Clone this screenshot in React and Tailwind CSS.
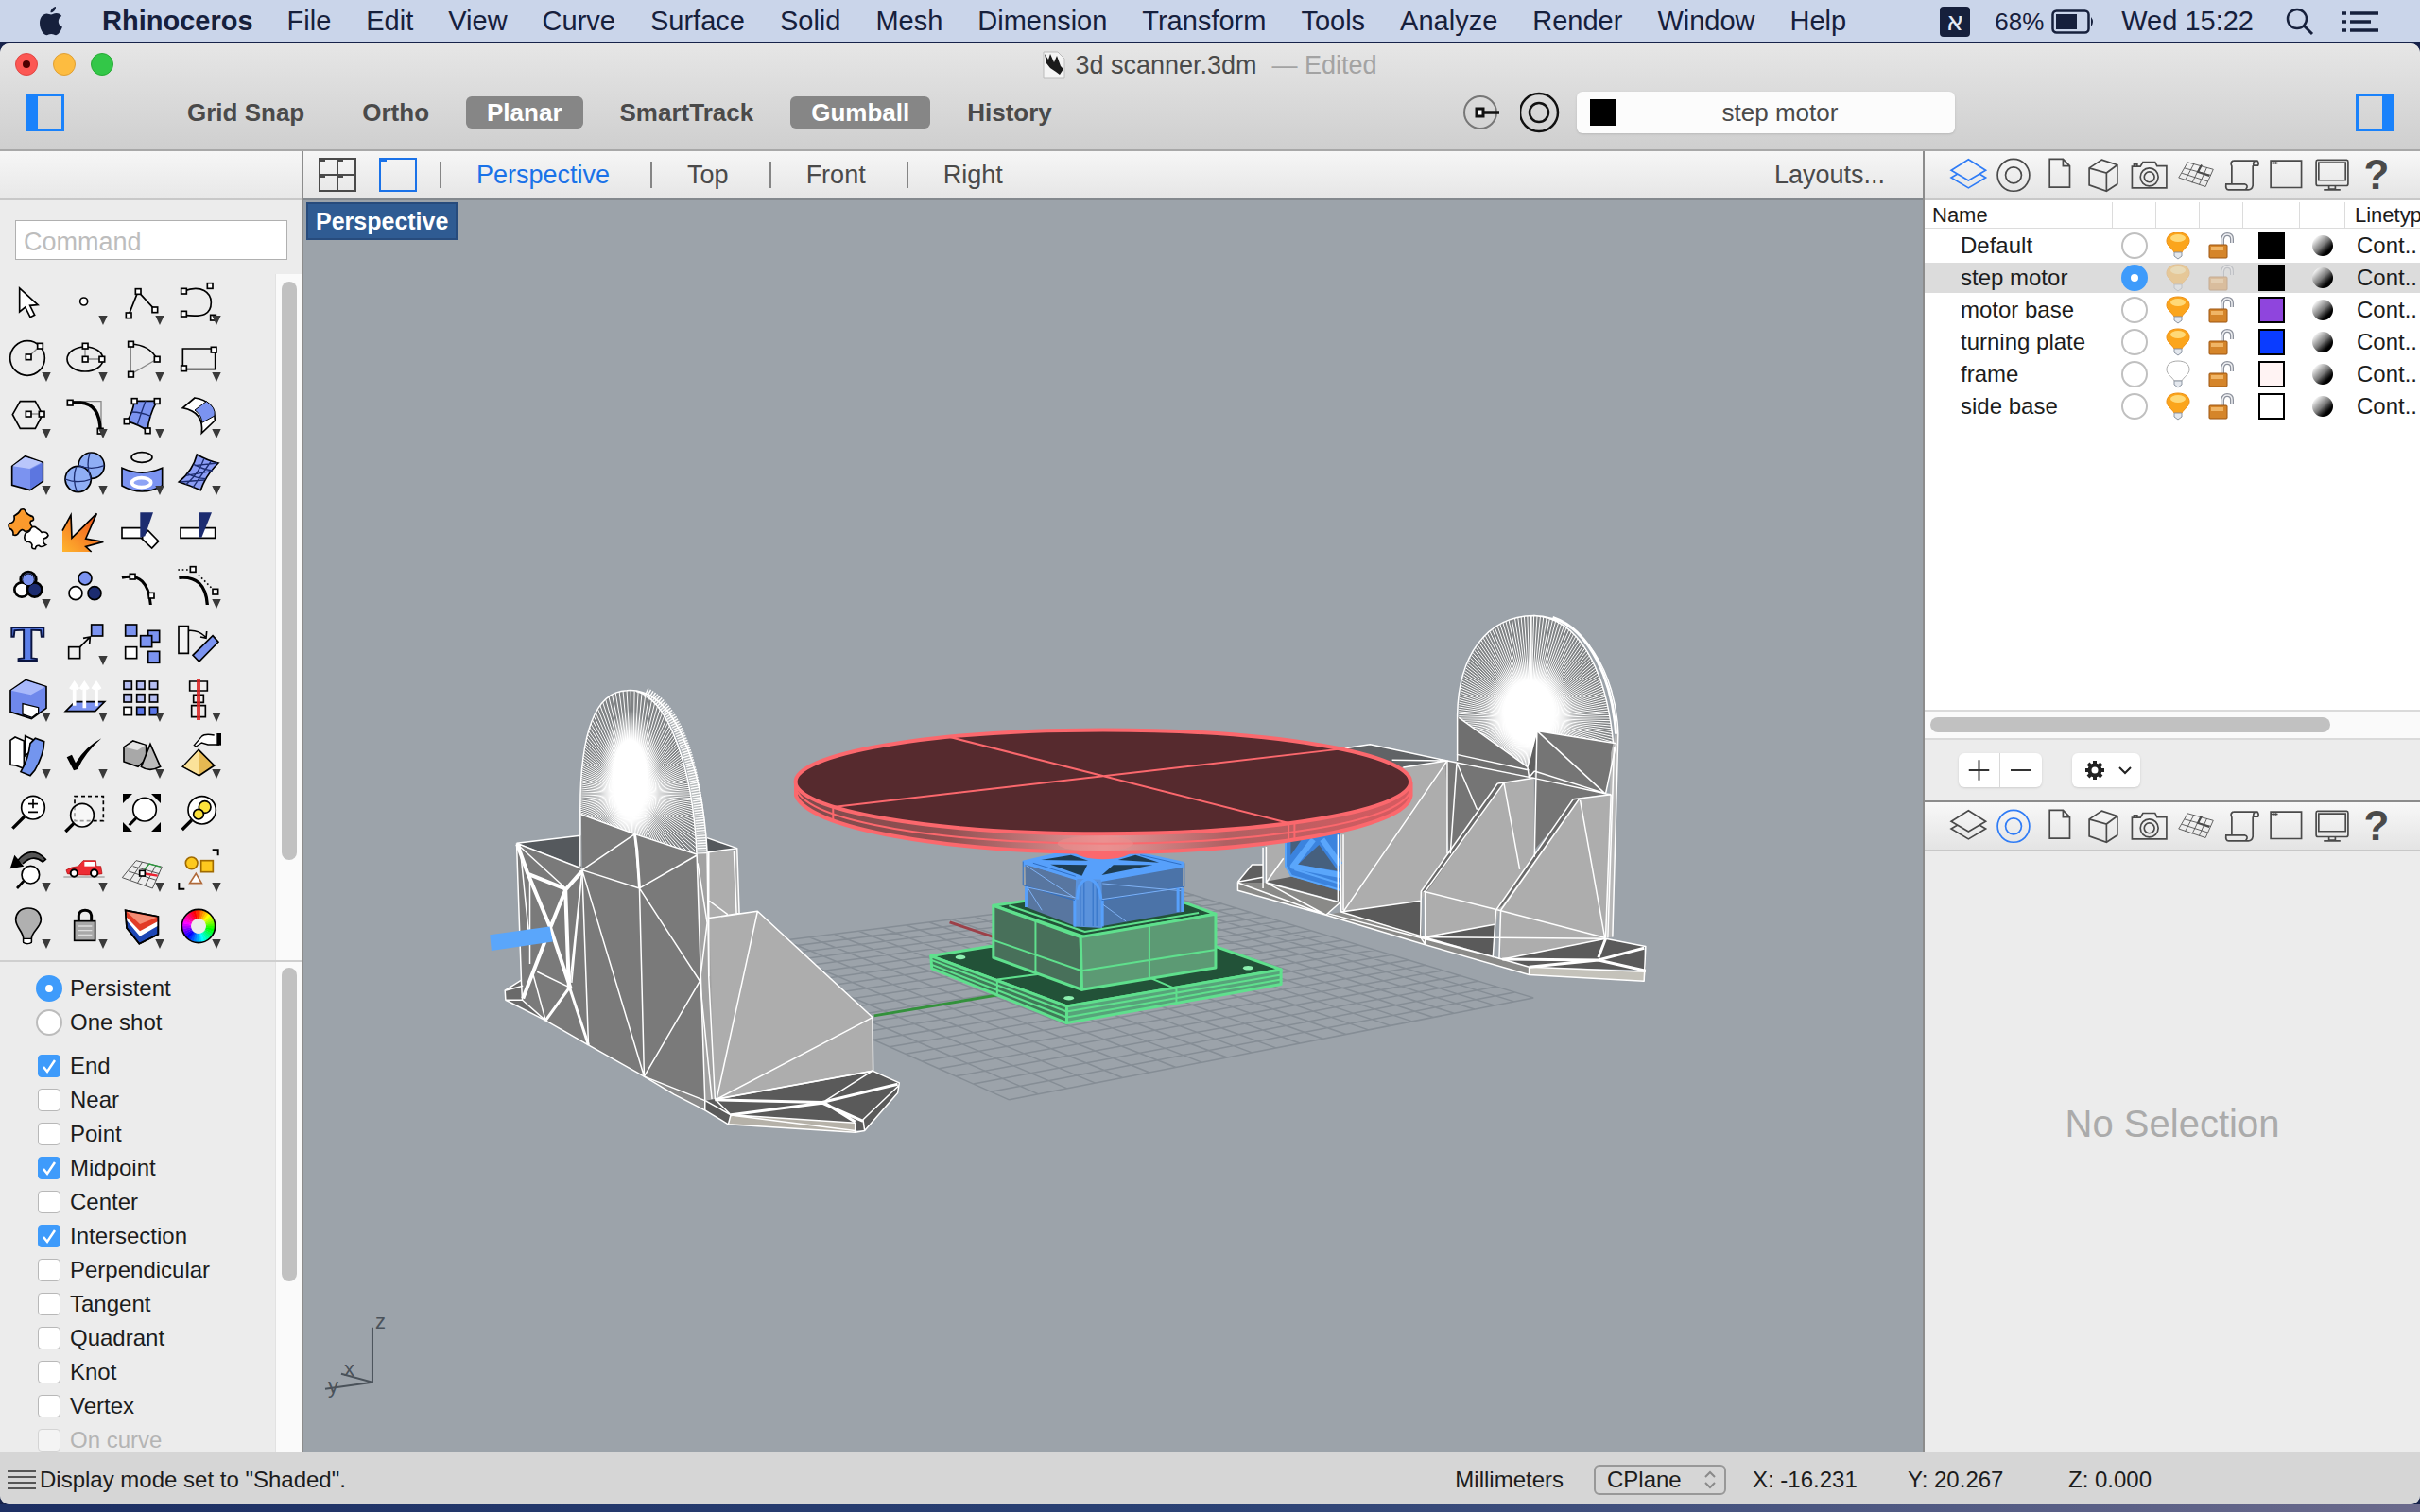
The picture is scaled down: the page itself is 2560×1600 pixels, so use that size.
import React from "react";
import { useState } from "react";

const menus = [
  "File", "Edit", "View", "Curve", "Surface", "Solid", "Mesh", "Dimension",
  "Transform", "Tools", "Analyze", "Render", "Window", "Help",
];

const layers = [
  { name: "Default", color: "#000000", on: true },
  { name: "step motor", color: "#000000", on: true },
  { name: "motor base", color: "#8f45dd" },
  { name: "turning plate", color: "#0a3cff" },
  { name: "frame", color: "#fff3f3", off: true },
  { name: "side base", color: "#ffffff" },
];

const BLUE = "#7b93f0";
const NAVY = "#1c2c70";

const App = () => {
  return (
    <div className="h-screen flex flex-col overflow-hidden bg-[#16224a] font-['Liberation_Sans',Arial,sans-serif] text-[#1c1c1c]">
      <MenuBar />
      <div className="mt-0.5 flex-1 min-h-0 flex flex-col overflow-hidden rounded-[10px] bg-[#ececec]">
        <TitleBar />
        <div className="flex-1 min-h-0 flex">
          <Sidebar />
          <main className="flex-1 min-w-0 flex flex-col">
            <ViewTabs />
            <Viewport />
          </main>
          <RightPanel />
        </div>
        <StatusBar />
      </div>
      <div className="h-2 shrink-0 bg-linear-to-r from-[#1d2f63] via-[#2b4275] to-[#6b6a8c]"></div>
    </div>
  );
};

const MenuBar = () => {
  return (
    <nav className="h-11 shrink-0 flex items-center bg-[#cad5ea] text-[29px] text-[#16203c] whitespace-nowrap pl-10 pr-11 pt-0.5">
      <svg viewBox="0 0 26 32" className="w-7 h-8 mr-10" fill="#16203c">
        <path d="M18 0c.3 3-2.500 6.500-5.500 6.300C12.200 3.500 15 .4 18 0z" />
        <path d="M13 8.500c1.300 0 3-1.500 5.600-1.500 2.500 0 4.600 1.300 5.600 3-5 2.800-4.200 9.700.8 11.600-1.200 3.400-4 8.600-6.800 8.600-2 0-2.700-1.200-5-1.200-2.400 0-3.200 1.200-5 1.200C4.800 30.200 1 23.500 1 17.300 1 11.200 4.800 7.500 8.400 7.500c2 0 3.400 1 4.600 1z" />
      </svg>
      <button className="font-bold mr-9">Rhinoceros</button>
      <div className="flex gap-[37px]">
        {menus.map((m) => (
          <button key={m}>{m}</button>
        ))}
      </div>
      <div className="ml-auto flex items-center">
        <span className="w-8 h-8 rounded bg-[#16203c] text-[#e4eaf6] text-[28px] leading-8 text-center font-['DejaVu_Sans',sans-serif]">א</span>
        <span className="ml-[26px] text-[26px]">68%</span>
        <svg viewBox="0 0 46 26" className="ml-2 w-[46px] h-[26px]">
          <rect x="1.500" y="1.500" width="38" height="23" rx="4" fill="none" stroke="#16203c" strokeWidth="2.500" />
          <rect x="5" y="5" width="22" height="16" fill="#16203c" />
          <path d="M42 8q4 5 0 10z" fill="#16203c" />
        </svg>
        <span className="ml-7">Wed 15:22</span>
        <svg viewBox="0 0 30 30" className="ml-[34px] w-[30px] h-[30px]" fill="none" stroke="#16203c" strokeWidth="2.500">
          <circle cx="12" cy="12" r="10" />
          <path d="M19 19l9 9" strokeWidth="3" />
        </svg>
        <svg viewBox="0 0 38 24" className="ml-[30px] w-[38px] h-6" stroke="#16203c" strokeWidth="3.500">
          <path d="M0 3h4M8 3h30M0 12h4M8 12h22M0 21h4M8 21h30" />
        </svg>
      </div>
    </nav>
  );
};

const TitleBar = () => {
  return (
    <header className="shrink-0 h-[114px] bg-linear-to-b from-[#e6e6e6] to-[#cfcfcf] border-b-2 border-[#a8a8a8]">
      <div className="h-[46px] relative flex items-center justify-center text-[27px] text-[#4a4a4a]">
        <div className="absolute left-4 top-2.5 flex gap-4">
          <button aria-label="Close" className="w-6 h-6 rounded-full bg-[#fc5753] border border-[#df4744] flex items-center justify-center">
            <span className="w-2 h-2 rounded-full bg-[#4d0000]"></span>
          </button>
          <button aria-label="Minimize" className="w-6 h-6 rounded-full bg-[#fdbc40] border border-[#de9f34]"></button>
          <button aria-label="Zoom" className="w-6 h-6 rounded-full bg-[#33c748] border border-[#27aa35]"></button>
        </div>
        <svg viewBox="0 0 24 30" className="w-6 h-[30px] mr-2.5">
          <path d="M1 1h15l7 7v21H1z" fill="#f4f4f4" stroke="#bbb" />
          <path d="M2 3l4 6 2-6 4 9 3-7 4 11 3 3-4 6-4-3-6-4-4-5z" fill="#1a1a1a" />
        </svg>
        <span>3d scanner.3dm</span>
        <span className="ml-4 text-[#a3a3a3]">— Edited</span>
      </div>
      <div className="h-[54px] flex items-center pl-7 pr-7">
        <button aria-label="Toggle left sidebar" className="w-10 h-10 border-[3px] border-l-[12px] border-[#1a82fb]"></button>
        <div className="ml-[108px] flex gap-[17px]">
          <ModeButton label="Grid Snap" />
          <ModeButton label="Ortho" />
          <ModeButton label="Planar" on />
          <ModeButton label="SmartTrack" />
          <ModeButton label="Gumball" on />
          <ModeButton label="History" />
        </div>
        <button aria-label="Record history" className="ml-auto">
          <svg viewBox="0 0 44 44" className="w-11 h-11" fill="none" stroke="#111" strokeWidth="3">
            <circle cx="22" cy="22" r="17" stroke="#777" strokeWidth="2" />
            <rect x="18" y="18" width="7" height="8" fill="#fff" />
            <path d="M25 22h17" strokeWidth="3.500" />
          </svg>
        </button>
        <button aria-label="Object properties" className="ml-5">
          <svg viewBox="0 0 44 44" className="w-11 h-11" fill="none" stroke="#111" strokeWidth="2.500">
            <circle cx="20" cy="22" r="20" />
            <circle cx="20" cy="22" r="10" />
          </svg>
        </button>
        <button className="ml-4 w-[400px] h-11 rounded-md bg-[#fcfcfc] shadow-sm flex items-center pl-3.5 pr-3 text-[26px] text-[#4a4a4a]">
          <span className="w-7 h-7 bg-black"></span>
          <span className="flex-1">step motor</span>
        </button>
        <button aria-label="Toggle right sidebar" className="ml-[424px] w-10 h-10 border-[3px] border-r-[12px] border-[#1a82fb]"></button>
      </div>
    </header>
  );
};

const ModeButton = ({ label, on }) => (
  <button
    className={
      on
        ? "h-[34px] px-[22px] rounded-md bg-[#868686] text-white font-bold text-[26px] leading-8"
        : "h-[34px] px-[22px] rounded-md text-[#4a4a4a] font-bold text-[26px] leading-8"
    }
  >
    {label}
  </button>
);

/* ---------- left sidebar ---------- */

// small square control point
const H = ({ x, y }) => (
  <rect x={x - 8} y={y - 8} width="17" height="17" fill="#fff" stroke="#000" strokeWidth="5" />
);
const G = (props) => <path fill="none" stroke="#888" strokeWidth="4" {...props} />;
const P = (props) => <path fill="none" stroke="#000" strokeWidth="5" {...props} />;
const Box = ({ x, y, s = 36, f = BLUE }) => (
  <rect x={x} y={y} width={s} height={s} fill={f} stroke="#000" strokeWidth="5" />
);

const wheel = Array.from({ length: 36 }, (_, i) => {
  const a = ((i * 10 - 1) * Math.PI) / 180;
  const b = ((i * 10 + 11) * Math.PI) / 180;
  const pt = (r, t) => `${90 + r * Math.sin(t)} ${90 - r * Math.cos(t)}`;
  return { d: `M${pt(52, a)}L${pt(52, b)}L${pt(24, b)}L${pt(24, a)}Z`, fill: `hsl(${i * 10 + 20} 100% 50%)` };
});

const tools = [
  // points and curves
  ["Select", 0, <P d="M62 45V120L80 105L96 137L110 130L95 100L120 98Z" fill="#fff" />],
  ["Point", 1, <circle cx="86" cy="87" r="12" fill="#fff" stroke="#000" strokeWidth="5" />],
  ["Polyline", 1, <><P d="M48 131L78 55L131 113" /><H x={78} y={55} /><H x={48} y={131} /><H x={131} y={113} /></>],
  ["Curve", 1, <><P d="M43 54C100 32 130 60 130 90C130 128 105 138 43 130" /><H x={43} y={54} /><H x={126} y={37} /><H x={43} y={126} /><H x={136} y={138} /></>],
  ["Circle", 1, <><circle cx="87" cy="87" r="55" fill="none" stroke="#000" strokeWidth="5" /><G d="M90 83L127 48" /><H x={90} y={83} /><H x={127} y={48} /></>],
  ["Ellipse", 1, <><ellipse cx="90" cy="90" rx="57" ry="39" fill="none" stroke="#000" strokeWidth="5" /><G d="M90 48V90H143" /><H x={90} y={48} /><H x={90} y={90} /><H x={143} y={90} /></>],
  ["Arc", 1, <><G d="M55 42V138L138 90" /><P d="M55 42Q115 45 138 90" /><H x={55} y={42} /><H x={138} y={90} /><H x={55} y={138} /></>],
  ["Rectangle", 1, <><P d="M40 57H143V122H40Z" /><H x={138} y={60} /><H x={43} y={119} /></>],
  ["Polygon", 1, <><P d="M40 86L64 44H112L135 86L112 130H64Z" /><G d="M90 84H132" /><H x={90} y={84} /><H x={132} y={84} /></>],
  ["Fillet", 1, <><G d="M42 44H141V138" /><P d="M42 48H75Q138 52 138 138" strokeWidth="10" /><H x={42} y={48} /><H x={138} y={138} /></>],
  ["Surface", 1, <><P d="M66 43H138Q112 90 108 137Q80 118 42 107Q62 80 66 43Z" fill={BLUE} /><G d="M102 43Q88 80 76 118M58 78Q90 78 120 92" stroke={NAVY} /><H x={66} y={43} /><H x={138} y={43} /><H x={108} y={137} /><H x={42} y={107} /></>],
  ["Blend", 1, <><P d="M40 65L78 33Q142 42 142 105L100 145Q108 78 40 65Z" fill="#fff" /><P d="M78 72L115 44Q146 64 141 90L101 112Q100 86 78 72Z" fill={BLUE} strokeWidth="3" /></>],
  // solids
  ["Box", 1, <><P d="M38 70L80 38L136 58V118L95 146L38 130Z" fill={BLUE} /><path d="M40 70L80 41L133 58L94 78Z" fill="#b9c6fb" /><path d="M96 80L134 60V116L96 143Z" fill="#5c76e0" /></>],
  ["Sphere", 1, <><g fill="#8faef5" stroke="#000" strokeWidth="5"><circle cx="110" cy="68" r="41" /><circle cx="68" cy="111" r="41" /></g><G d="M69 68Q110 84 151 68M105 28Q92 70 108 108M27 111Q68 127 109 111M62 72Q48 110 64 151" stroke={NAVY} /></>],
  ["Boolean", 1, <><ellipse cx="90" cy="42" rx="33" ry="16" fill="none" stroke="#000" strokeWidth="5" /><P d="M27 76Q90 105 155 76V132Q90 168 27 132Z" fill={BLUE} /><ellipse cx="89" cy="122" rx="30" ry="15" fill="#8da3f5" stroke="#fff" strokeWidth="11" /></>],
  ["Mesh", 1, <><P d="M85 33Q118 52 153 60Q112 100 97 146Q60 130 28 120Q72 84 85 33Z" fill="#8b9df5" /><G d="M108 45Q90 95 50 128M130 54Q98 100 72 138M74 64Q105 80 135 84M55 94Q85 108 113 110M150 60L78 68M130 86L50 100M108 114L32 120" stroke={NAVY} /></>],
  // join and split
  ["Join", 0, <><P d="M45 48Q60 40 66 28Q78 22 82 36Q92 48 104 50Q112 62 98 64Q92 72 104 84Q90 100 78 96Q70 86 60 100Q54 112 42 108Q44 92 30 88Q22 72 36 70Q48 66 45 48Z" fill="#fb9a2c" /><P d="M82 102Q94 100 98 88Q106 78 116 86Q126 92 132 100Q150 96 153 110Q148 120 138 120Q134 134 146 140Q130 150 124 142Q114 140 112 152Q98 154 102 140Q98 128 84 130Q72 118 82 102Z" fill="#fff" /></>],
  ["Explode", 0, <><path d="M18 162V95L45 45L48 118L127 40L92 120L148 130L92 145L110 162Z" fill="url(#flame)" /><P d="M18 95L45 45L48 118L127 40L92 120L148 130L92 145L110 162" /></>],
  ["Trim", 0, <><P d="M27 86H92V118H27ZM92 110L110 94L143 128L122 150L88 118" fill="#fff" /><path d="M85 37H126L100 112L85 116Z" fill={NAVY} /></>],
  ["Split", 0, <><P d="M33 86H143V118H33Z" fill="#fff" /><path d="M90 37H132L100 116H92Z" fill={NAVY} /></>],
  ["Group", 1, <g stroke="#000" strokeWidth="8"><circle cx="90" cy="70" r="25" fill={BLUE} /><circle cx="69" cy="102" r="23" fill="#fff" /><circle cx="110" cy="102" r="23" fill={NAVY} /><circle cx="90" cy="70" r="19" fill={BLUE} strokeWidth="3" /></g>],
  ["Ungroup", 0, <g stroke="#000" strokeWidth="5"><circle cx="90" cy="66" r="21" fill={BLUE} /><circle cx="60" cy="113" r="21" fill="#fff" /><circle cx="120" cy="113" r="21" fill={NAVY} /></g>],
  ["Edit points", 0, <><P d="M27 64Q110 44 118 150" strokeWidth="9" /><H x={60} y={60} /><H x={120} y={120} /></>],
  ["Control points", 1, <><P d="M28 64Q112 56 118 150" strokeWidth="10" /><P d="M25 39H60M90 55L135 100" strokeDasharray="5 8" /><H x={72} y={37} /><H x={143} y={108} /></>],
  // transforms
  ["Text", 0, <text x="88" y="146" fontSize="160" fontWeight="bold" fontFamily="Liberation Serif, serif" textAnchor="middle" fill="#5c80ea" stroke="#0a1440" strokeWidth="6">T</text>],
  ["Move", 1, <><Box x={38} y={104} f="#eee" /><Box x={110} y={33} /><P d="M74 104L104 74M84 76L106 72L104 94" /></>],
  ["Copy", 0, <><Box x={110} y={52} /><Box x={86} y={68} /><Box x={38} y={33} /><Box x={38} y={104} f="#fff" /><Box x={110} y={118} /></>],
  ["Rotate", 0, <><P d="M27 38H58V124H27Z" fill="#f4f4f4" /><P d="M135 68L153 88L92 150L72 130Z" fill={BLUE} /><P d="M60 52Q90 50 112 72M116 54L114 76L96 72" /></>],
  ["Solid edit", 1, <><P d="M33 62L82 28L147 50V118L100 152L33 130Z" fill="#6f88ec" /><path d="M35 62L82 31L144 50L98 76Z" fill="#a8b8fa" /><P d="M72 104L122 116V132L102 148L72 138Z" fill="#fff" strokeWidth="4" /></>],
  ["Extrude", 1, <><P d="M58 98H152L122 128H28Z" fill={BLUE} /><path d="M56 110V45M88 118V45M126 112V45M44 58L56 40L68 58M76 58L88 40L100 58M114 58L126 40L138 58" stroke="#fff" strokeWidth="11" fill="none" /></>],
  ["Array", 1, <>{[33, 74, 115].map((x) => [33, 74, 115].map((y) => <Box key={x + "-" + y} x={x} y={y} s={25} f={x === 33 && y === 115 ? "#fff" : y === 115 ? "#5a76e8" : "#b4bdf2"} />))}</>],
  ["Align", 1, <><P d="M62 33H118V63H62ZM74 76H106V100H74ZM68 110H112V146H68Z" fill="#eee" /><path d="M90 26V156" stroke="#dc2020" strokeWidth="12" opacity=".85" /></>],
  ["Project", 1, <><P d="M33 40L48 30L76 42V130L50 120L33 118Z" fill="#fff" /><P d="M80 26L105 38L92 80L78 90Z" fill="#fff" /><P d="M96 50L112 34L140 44Q140 84 110 136L96 152L66 140Q90 100 96 50Z" fill="#7395ee" /></>],
  ["Check", 1, <path d="M32 94L48 86L60 112Q92 60 142 34Q90 80 66 132L54 136Z" fill="#000" />],
  ["Render mesh", 1, <><P d="M33 62L62 42L104 56V100L78 124L33 108Z" fill="#a8a8a8" /><path d="M36 62L62 45L101 56L76 72Z" fill="#e4e4e4" /><P d="M117 52L88 124Q115 142 149 124Z" fill="#bcbcbc" /></>],
  ["Select objects", 1, <><P d="M90 70L140 120L92 152L40 124Z" fill="#e5b852" /><path d="M90 73L92 149L43 123Z" fill="#fbe29a" /><P d="M154 18V54H120L100 48L82 60L76 56L100 28Q110 18 140 24" fill="#fff" strokeWidth="4" /><path d="M148 18H162V56H148Z" /></>],
  // view
  ["Zoom dynamic", 0, <><circle cx="105" cy="74" r="37" fill="#fff" stroke="#000" strokeWidth="5" /><P d="M90 62H120M105 48V76M90 88H120" /><P d="M78 102L40 140" strokeWidth="10" /></>],
  ["Zoom window", 0, <><P d="M57 38H148V116H57Z" strokeDasharray="12 9" /><circle cx="81" cy="98" r="37" fill="#fff" fillOpacity=".6" stroke="#000" strokeWidth="5" /><P d="M54 124L28 150" strokeWidth="10" /></>],
  ["Zoom extents", 0, <><path d="M30 30H60L30 60ZM150 30H120L150 60ZM30 150H60L30 120ZM150 150H120L150 120Z" /><circle cx="99" cy="80" r="37" fill="#fff" stroke="#000" strokeWidth="5" /><P d="M72 107L50 130" strokeWidth="9" /></>],
  ["Zoom selected", 0, <><circle cx="101" cy="82" r="44" fill="#fff" stroke="#000" strokeWidth="5" /><P d="M68 114L38 144" strokeWidth="10" /><g fill="#fde23c" stroke="#000" strokeWidth="5"><circle cx="110" cy="72" r="19" /><circle cx="90" cy="95" r="16" /></g></>],
  ["Undo view", 1, <><P d="M56 62Q100 10 145 58L136 66Q104 40 72 72" fill="#555" /><path d="M32 88L46 44L76 80Z" /><circle cx="97" cy="107" r="28" fill="#fff" stroke="#000" strokeWidth="5" /><P d="M76 126L54 150" strokeWidth="8" /></>],
  ["Right view", 1, <><path d="M30 92Q45 82 68 80L84 62H124L126 80H140L144 104Q100 112 34 104Z" fill="#ee2c34" stroke="#a00" strokeWidth="2" /><path d="M88 66H120V80H88Z" fill="#fff" /><path d="M22 114H152" stroke="#aaa" strokeWidth="4" /><g fill="#fff" stroke="#000" strokeWidth="6"><circle cx="55" cy="102" r="11" /><circle cx="119" cy="102" r="11" /></g></>],
  ["CPlane", 1, <><G d="M72 62L154 82M62 80L146 104M48 96L136 124M28 116L124 150M72 62L28 116M92 66L52 126M112 72L76 134M134 78L100 142M154 82L124 150" stroke="#555" strokeWidth="3" /><path d="M92 102L140 110" stroke="#ee2030" strokeWidth="7" /><path d="M98 90L114 72L150 82" stroke="#2a9a3c" strokeWidth="4" fill="none" /><H x={91} y={102} /></>],
  ["Object snap", 1, <><circle cx="68" cy="70" r="19" fill="#fdc91e" stroke="#a06a00" strokeWidth="5" /><rect x="98" y="62" width="38" height="36" fill="#fdc91e" stroke="#a06a00" strokeWidth="5" /><P d="M82 103L100 134H62Z" fill="#fff" stroke="#b06a3a" /><P d="M134 28H152V46M28 132V152H46" strokeWidth="6" /></>],
  ["Hide", 1, <><P d="M90 33C62 33 50 52 50 70C50 94 74 108 74 130V140Q86 150 100 140V130C100 108 130 94 130 70C130 52 118 33 90 33Z" fill="#b0b0b0" /><P d="M74 130H100V142Q88 150 74 142Z" fill="#fff" strokeWidth="4" /></>],
  ["Lock", 1, <><P d="M70 76V56Q72 40 90 40Q108 40 110 56V76" strokeWidth="9" /><rect x="56" y="74" width="66" height="62" fill="#a8a8a8" stroke="#000" strokeWidth="5" /><path d="M66 90H112M66 104H112M66 118H112" stroke="#ddd" strokeWidth="4" /></>],
  ["Layers", 1, <><P d="M38 40L142 60V116L82 146L42 96Z" fill="#1d46b4" /><path d="M40 70L84 122L140 90V74L84 100L40 54Z" fill="#fff" /><path d="M40 42L140 61L140 76L84 106L42 62Z" fill="#e23b25" /><path d="M42 44L138 62L84 84Z" fill="#f58d74" /><P d="M38 40L142 60V116L82 146L42 96Z" /></>],
  ["Color", 1, <>{wheel.map((w) => <path key={w.d} d={w.d} fill={w.fill} />)}<circle cx="90" cy="90" r="53" fill="none" stroke="#000" strokeWidth="5" /></>],
];

const snaps = [
  ["End", true], ["Near", false], ["Point", false], ["Midpoint", true],
  ["Center", false], ["Intersection", true], ["Perpendicular", false],
  ["Tangent", false], ["Quadrant", false], ["Knot", false], ["Vertex", false],
];

const radioClass =
  "appearance-none shrink-0 w-7 h-7 rounded-full bg-white border-2 border-[#bcbcbc] checked:border-10 checked:border-[#3e9bfb]";

const Sidebar = () => {
  return (
    <aside className="w-[321px] shrink-0 flex flex-col border-r border-[#8c8c8c]">
      <div className="h-[52px] shrink-0 bg-linear-to-b from-[#f6f6f6] to-[#e8e8e8] border-b-2 border-[#c8c8c8]"></div>
      <div className="pt-[21px] pb-[15px] pl-4 pr-4">
        <input
          aria-label="Command"
          placeholder="Command"
          className="w-full h-[42px] px-2 pt-1 bg-white border border-[#b0b0b0] text-[27px] placeholder:text-[#bdbdbd]"
        />
      </div>
      <div className="flex shrink-0">
        <div className="flex-1 grid grid-cols-[60px_60px_60px_60px] pb-1.5">
          {tools.map(([name, more, art]) => (
            <button key={name} aria-label={name} className="w-[60px] h-[60px]">
              <svg viewBox="0 0 180 180" className="w-full h-full">
                <defs>
                  <linearGradient id="flame" x1="0" y1="1" x2="1" y2="0">
                    <stop offset="0" stopColor="#ffb52e" />
                    <stop offset="1" stopColor="#ee4a1c" />
                  </linearGradient>
                </defs>
                {art}
                {more === 1 && <path d="M133 132H161L147 162Z" fill="#3a3a3a" />}
              </svg>
            </button>
          ))}
        </div>
        <div className="w-[29px] bg-[#fafafa] border-l border-[#e2e2e2] flex justify-center pt-2">
          <div className="w-4 h-[612px] rounded-full bg-[#c1c1c1]"></div>
        </div>
      </div>
      <SnapPanel />
    </aside>
  );
};

const SnapPanel = () => {
  const [mode, setMode] = useState("Persistent");
  const [checked, setChecked] = useState(Object.fromEntries(snaps));

  return (
    <div className="flex-1 min-h-0 overflow-hidden border-t-2 border-[#cfcfcf] flex text-2xl">
      <div className="flex-1 pt-2.5 pl-[38px]">
        {["Persistent", "One shot"].map((m) => (
          <label key={m} className="h-9 flex items-center gap-2">
            <input type="radio" name="snap-mode" checked={mode === m} onChange={() => setMode(m)} className={radioClass} />
            {m}
          </label>
        ))}
        <div className="h-2.5"></div>
        {snaps.map(([name]) => (
          <Snap
            key={name}
            name={name}
            checked={checked[name]}
            onChange={() => setChecked({ ...checked, [name]: !checked[name] })}
          />
        ))}
        <Snap name="On curve" checked={false} onChange={() => {}} disabled />
      </div>
      <div className="w-[29px] bg-[#fafafa] border-l border-[#e2e2e2] flex justify-center pt-1.5">
        <div className="w-4 h-[332px] rounded-full bg-[#c1c1c1]"></div>
      </div>
    </div>
  );
};

const Snap = ({ name, checked, onChange, disabled }) => (
  <label className={disabled ? "h-9 pl-0.5 flex items-center text-[#b4b4b4]" : "h-9 pl-0.5 flex items-center"}>
    <span className="relative w-6 h-6 mr-2.5">
      <input
        type="checkbox"
        checked={checked}
        onChange={onChange}
        disabled={disabled}
        className="block appearance-none w-6 h-6 rounded bg-white border border-[#b8b8b8] checked:bg-[#3e9bfb] checked:border-[#3e9bfb] disabled:bg-[#f4f4f4] disabled:border-[#d4d4d4]"
      />
      {checked && (
        <svg viewBox="0 0 24 24" className="absolute inset-0 w-6 h-6 pointer-events-none">
          <path d="M6 13l4 5 8-12" fill="none" stroke="#fff" strokeWidth="2.500" />
        </svg>
      )}
    </span>
    {name}
  </label>
);

/* ---------- viewport ---------- */

const ViewTabs = () => {
  const [tab, setTab] = useState("Perspective");
  return (
    <div className="h-[52px] shrink-0 flex items-center pl-4 pr-10 bg-linear-to-b from-[#f6f6f6] to-[#e6e6e6] border-b-2 border-[#84898e] text-[27px] text-[#4a4a4a]">
      <button aria-label="Four views">
        <svg viewBox="0 0 40 36" className="w-10 h-9" fill="none" stroke="#4a4a4a" strokeWidth="2">
          <path d="M1 1H39V35H1ZM20 1V35M1 18H39M1 3H7M20 3H26M1 20H7M20 20H26" />
        </svg>
      </button>
      <button aria-label="Single view" className="ml-6 mr-6">
        <svg viewBox="0 0 40 36" className="w-10 h-9" fill="none" stroke="#1a72e8" strokeWidth="2">
          <path d="M1 1H39V35H1ZM1 3H8" />
        </svg>
      </button>
      {["Perspective", "Top", "Front", "Right"].map((t) => (
        <React.Fragment key={t}>
          <span className="w-0.5 h-7 bg-[#858585]"></span>
          <button
            onClick={() => setTab(t)}
            className={t === tab ? "pl-[37px] pr-[43px] text-[#1a72e8]" : "pl-[37px] pr-[43px]"}
          >
            {t}
          </button>
        </React.Fragment>
      ))}
      <button className="ml-auto">Layouts...</button>
    </div>
  );
};

// construction plane corners: left, front, right, back
const corners = [[718, 1009], [1068, 1164], [1623, 1056], [1249, 943]];

const project = (u, v) => {
  const [[x0, y0], [x1, y1], [x2, y2], [x3, y3]] = corners;
  const sx = x0 - x1 + x2 - x3;
  const sy = y0 - y1 + y2 - y3;
  const den = (x1 - x2) * (y3 - y2) - (x3 - x2) * (y1 - y2);
  const g = (sx * (y3 - y2) - (x3 - x2) * sy) / den;
  const h = ((x1 - x2) * sy - sx * (y1 - y2)) / den;
  const w = g * u + h * v + 1;
  const x = ((x1 - x0 + g * x1) * u + (x3 - x0 + h * x3) * v + x0) / w;
  const y = ((y1 - y0 + g * y1) * u + (y3 - y0 + h * y3) * v + y0) / w;
  return `${x.toFixed(1)} ${y.toFixed(1)}`;
};

const N = 22;
const gridPath = Array.from({ length: N + 1 }, (_, i) => {
  const t = i / N;
  return `M${project(t, 0)}L${project(t, 1)}M${project(0, t)}L${project(1, t)}`;
}).join("");

const fan = (cx, cy, count) =>
  Array.from({ length: count }, (_, i) => {
    const a = (i / count) * Math.PI * 2;
    return `M${cx} ${cy}l${(Math.cos(a) * 600).toFixed(1)} ${(Math.sin(a) * 600).toFixed(1)}`;
  }).join("");

const Poly = ({ p, f }) => <polygon points={p} fill={f} />;
const Line = ({ d, w = 1.5, c = "#fff", f = "none" }) => (
  <path d={d} fill={f} stroke={c} strokeWidth={w} vectorEffect="non-scaling-stroke" strokeLinejoin="round" />
);

const Viewport = () => {
  return (
    <div className="relative flex-1 min-h-0 bg-[#9ca3aa]">
      <svg viewBox="321 212 1714 1324" className="w-full h-full">
        <defs>
          <radialGradient id="glow">
            <stop offset="0" stopColor="#fff" />
            <stop offset=".45" stopColor="#fff" />
            <stop offset=".8" stopColor="#fff" stopOpacity="0" />
          </radialGradient>
          <linearGradient id="rim">
            <stop offset="0" stopColor="#7c4a4c" />
            <stop offset=".25" stopColor="#945052" />
            <stop offset=".5" stopColor="#e69a9a" />
            <stop offset=".7" stopColor="#b06062" />
            <stop offset="1" stopColor="#d85a60" />
          </linearGradient>
          <clipPath id="domeA">
            <path d="M342 485C340 250 380 95 490 92C620 90 700 330 712 612L515 548Z" />
          </clipPath>
          <clipPath id="domeB">
            <path d="M762 388C760 200 850 66 1000 64C1140 70 1230 230 1252 468L1010 430L980 545Z" />
          </clipPath>
        </defs>
        <path d={gridPath} stroke="#858d95" strokeWidth="1.500" fill="none" />
        <path d="M1175 1033L1005 976" stroke="#9c4048" strokeWidth="3" />
        <path d="M1175 1033L925 1075" stroke="#33913b" strokeWidth="3" />
        <RearStand />
        <FrontStand />
        <Turntable />
        <g stroke="#4a525a" strokeWidth="2" fontSize="22">
          <path d="M394 1405V1463L361 1454M394 1463L344 1470" fill="none" />
          <g fill="#4a525a" stroke="none">
            <text x="397" y="1406">z</text>
            <text x="364" y="1456">x</text>
            <text x="347" y="1474">y</text>
          </g>
        </g>
      </svg>
      <div className="absolute left-[3px] top-0.5 h-10 px-2 pt-0.5 flex items-center bg-[#2f5b92] border-2 border-[#274b7c] text-[25px] font-bold text-white">
        Perspective
      </div>
    </div>
  );
};

const FrontStand = () => (
  <g transform="translate(500 700) scale(.33333)">
    <Poly p="745,560 840,593 745,606" f="#55595d" />
    <Poly p="745,605 840,597 847,800 750,815" f="#adadad" />
    <Poly p="750,815 905,793 1270,1130 1272,1300 775,1390 740,1000" f="#adadad" />
    <Poly p="145,577 345,553 345,655" f="#55595d" />
    <Poly p="103,1045 155,1012 170,1050 232,1140 105,1075" f="#6a6a6a" />
    <Poly p="140,577 348,655 345,485 515,548 712,612 740,1395 545,1318 368,1218 232,1140 158,1075" f="#7a7a7a" />
    <Poly p="545,1318 740,1395 738,1425 640,1375" f="#8a8a8a" />
    <Poly p="712,612 745,605 770,1390 738,1395" f="#a2a2a2" />
    <Poly p="740,1395 1270,1300 1355,1338 1350,1370 1245,1490 812,1470 738,1425" f="#5a5a5a" />
    <Poly p="820,1440 1215,1465 1215,1495 812,1472" f="#b5b1a8" />
    <path d="M342 485C340 250 380 95 490 92C620 90 700 330 712 612L515 548Z" fill="#7f8284" />
    <g clipPath="url(#domeA)">
      <path d={fan(508, 420, 170)} stroke="#fff" strokeWidth="3" />
      <ellipse cx="500" cy="370" rx="120" ry="270" fill="url(#glow)" />
    </g>
    <path d="M560 100C680 150 735 380 745 608H712C700 330 640 150 540 96Z" fill="#b4b8ba" />
    <path d="M550 98C665 150 722 380 729 610" fill="none" stroke="#fff" strokeWidth="30" strokeDasharray="4 4" />
    <Line d="M342 650V485C340 250 380 95 490 92C640 80 730 330 745 605M712 612C700 330 620 120 520 94" />
    <Line d="M345 485L515 548L712 612M348 662L515 548L530 720L712 615M348 662L530 720L722 1015L545 1318L348 662L368 1218M530 720L545 1318M712 612L738 1395M745 605L750 1000L770 1390" />
    <Line d="M515 548L522 600L530 718" w={3} />
    <Line d="M140 577L342 553M140 577L348 658M140 577L155 1020L158 1075L232 1140L368 1218L545 1318L740 1395M142 580L290 715M150 580L182 900M348 662L308 1035M348 662L315 1020M205 985L308 1035L368 1218M190 985L232 1140L308 1035M182 675V960" />
    <Line d="M142 580L175 672L245 840L312 1040M348 665L295 725L245 850L160 1070M175 674L295 722L306 1035" w={4} />
    <Line d="M308 1035L368 1218M308 1035L232 1140" w={3} />
    <Line d="M155 1012L103 1045L105 1075L232 1140M103 1045L160 1030M105 1075L160 1075M545 1318L640 1375L738 1425V1395" />
    <Line d="M745 560L840 593L745 606M840 593L847 800L750 815L905 793L1270 1130L1272 1300L775 1390L905 793M775 1390L1270 1130M752 760L810 803M715 640L745 830L722 1015L760 1390M830 600L838 800M750 605V1000" />
    <Line d="M770 1390L1270 1300L1355 1338L1350 1370L1245 1490L1215 1495L812 1470L738 1425M740 1395L820 1440L812 1470M820 1440L1215 1465V1495M1355 1345L1240 1455L1245 1490M1270 1300L1120 1395M830 1442L1215 1490M770 1390L820 1440" />
    <Line d="M770 1392L1110 1400L1350 1342M820 1440L1110 1402L1240 1460M1115 1400L1215 1462" w={3} />
    <Poly p="55,868 245,842 255,890 60,918" f="#5aa6fb" />
  </g>
);

const RearStand = () => (
  <g transform="translate(1290 630) scale(.33333)">
    <Poly p="400,485 480,473 720,525 560,560" f="#606366" />
    <Poly p="560,548 725,525 725,830 640,970 390,1005 385,700" f="#adadad" />
    <Poly p="720,525 755,530 1000,580 900,595 730,820" f="#757575" />
    <Poly p="757,385 980,545 985,575 755,530" f="#6f6f6f" />
    <Poly p="1005,430 1265,470 1230,630 1140,645 1000,810" f="#757575" />
    <Poly p="980,545 1010,430 1002,580 985,578" f="#606060" />
    <Poly p="905,595 1000,580 1000,830 890,1000 880,1045 655,1085 650,940" f="#adadad" />
    <Poly p="885,597 905,595 660,940 640,940" f="#6a6a6a" />
    <Poly p="1140,645 1245,630 1230,1090 895,1155 890,1000" f="#adadad" />
    <Poly p="1125,647 1147,645 900,985 880,1000" f="#6a6a6a" />
    <Poly p="1245,500 1268,400 1250,1085 1228,1088" f="#b8b8b8" />
    <Poly p="390,1005 640,970 645,1085" f="#5a5a5a" />
    <Poly p="655,1085 875,1045 870,1145" f="#5a5a5a" />
    <Poly p="340,1015 390,1005 900,1155 985,1180 985,1205 650,1108" f="#8a8a88" />
    <Poly p="900,1155 1230,1090 1350,1115 1355,1190 985,1180" f="#5a5a5a" />
    <Poly p="985,1180 1355,1195 1350,1225 985,1205" f="#c4c2ba" />
    <Poly p="60,910 105,855 140,855 140,930 60,935" f="#5f5f5f" />
    <Poly p="60,912 150,912 385,975 340,1015 60,937" f="#8a8a88" />
    <Poly p="145,780 215,770 225,895 150,910" f="#adadad" />
    <Poly p="150,908 230,893 385,930 385,972" f="#5f5f5f" />
    <Poly p="210,760 385,740 385,940 230,890 210,860" f="#3b83de" />
    <Poly p="318,792 378,875 250,855" f="#46607e" />
    <Poly p="228,770 270,765 228,825" f="#46607e" />
    <Line d="M212 770V860L230 890L385 935M240 870L385 915" c="#5aa6fb" w={2} />
    <Line d="M300 775L235 860L385 888M328 775L385 855" c="#5aa6fb" w={6} />
    <path d="M762 388C760 200 850 66 1000 64C1140 70 1230 230 1252 468L1010 430L980 545Z" fill="#7f8284" />
    <g clipPath="url(#domeB)">
      <path d={fan(990, 390, 200)} stroke="#fff" strokeWidth="3" />
      <ellipse cx="985" cy="370" rx="175" ry="220" fill="url(#glow)" />
    </g>
    <Line d="M757 525V380C760 190 850 66 1000 64C1160 66 1262 250 1268 440L1250 1085M1000 64C1140 70 1230 230 1252 468M992 66V390" />
    <Line d="M1060 70C1180 110 1250 270 1261 440" w={3} />
    <Line d="M762 388L980 545L1010 430L1262 470M980 545L985 578L1002 558M755 505L985 555M725 525L1000 580L1230 630M755 530L820 680M755 535L735 820M725 525V820M1010 430L1225 628L1002 558M1010 430L1002 830M1262 470L1228 630L1245 632" />
    <Line d="M400 485L480 473L725 525L585 546M550 523L725 525M725 525L395 1005M385 760L388 1005L640 970M905 595L1000 580M905 595L955 870M885 597L905 595L655 940V1108M885 597L642 940L640 1085L655 1108M650 940L890 1000L1228 1088M1125 647L1245 632M1145 645L895 1000M1125 647L880 1000L870 1150M895 1000L890 1155M1147 650L1225 1085M1245 632L1228 1088M1255 480L1235 1088" />
    <Line d="M140 800V930M150 798V912M150 912L205 835M60 910L105 855H140M60 910L140 895M60 910V937L340 1015L385 975L150 912L340 1015M60 912L340 1015L650 1108L985 1205L1350 1225L1355 1115L1228 1090L655 1085L875 1045M388 1005L650 1085L985 1180L1355 1195M345 1010L900 1155L985 1180V1205M378 760V970M395 760V1000" />
    <Line d="M1228 1090L1205 1150M900 1155L1205 1158L1350 1120M985 1180L1205 1158L1355 1192" w={3} />
    <Line d="M900 1155L1228 1090" />
  </g>
);

const Motor = () => {
  const blue = "#57a0fb";
  return (
    <g transform="translate(1060 880) scale(.33333)">
      <Poly p="66,92 180,66 440,66 580,96 575,120 310,160 240,155 70,110" f={blue} />
      <Poly p="75,104 240,152 235,300 78,240" f="#5876a0" />
      <Poly p="315,155 575,112 575,255 320,300" f="#4b73a8" />
      <Poly p="236,150 318,152 320,306 230,302" f="#5a92dc" />
      <Poly p="125,90 220,74 275,92" f="#1d3c52" />
      <Poly p="155,104 272,106 255,140" f="#1d3c52" />
      <Poly p="318,138 355,106 480,106" f="#1d3c52" />
      <Poly p="370,90 425,74 500,98" f="#1d3c52" />
      <Line d="M70 98L240 150M315 155L578 108M78 175V240M574 180V255M232 215V302M320 215V302" c={blue} w={3} />
      <Line d="M100 100L235 142M440 74L570 104M68 95V170L232 218M580 100V175L318 218M250 165V300M262 160V300M290 160V300M302 160V300" c="#2f6fc4" w={1} />
      <Line d="M78 108L232 210M78 176L235 210M84 180L128 250M320 215L575 178M320 165L570 188M322 232L395 285" c="#7fb2f5" w={1} />
      <Line d="M240 215C242 180 248 155 275 150C302 155 312 180 316 215M560 180V255" c={blue} w={3} />
    </g>
  );
};

const Turntable = () => {
  const green = "#5fe08d";
  const red = "#fb686d";
  return (
    <>
      <g transform="translate(820 740) scale(.44643 .33333)">
        <Line d="M370 815L510 785H1045L1200 858L692 975Z" f="#225238" c={green} w={3} />
        <Line d="M370 815L692 975V1028L372 855Z" f="#3f7a58" c={green} w={3} />
        <Line d="M692 975L1200 858V905L692 1028Z" f="#57a37a" c={green} w={3} />
        <Line d="M371 828L692 992L1200 875M371 842L692 1010L1200 890M527 890V942M527 890L640 870M890 885L952 920V965" c={green} w={2} />
        <g fill="#8df0b0">
          <ellipse cx="440" cy="819" rx="12" ry="7" />
          <ellipse cx="697" cy="949" rx="12" ry="7" />
          <ellipse cx="1122" cy="853" rx="12" ry="7" />
        </g>
        <Line d="M518 655L620 635H950L1045 682L735 755Z" f="#225238" c={green} w={3} />
        <Line d="M518 655L725 755L728 922L518 820Z" f="#48705a" c={green} w={3} />
        <Line d="M725 755L1045 682V852L728 922Z" f="#5c9a74" c={green} w={3} />
        <Line d="M518 765L727 862L1045 795M618 705V868M888 718V885" c={green} w={2} />
        <Line d="M555 655L735 738L1005 678" c={green} w={2} />
      </g>
      <Motor />
      <g transform="translate(820 740) scale(.44643 .33333)">
        <ellipse cx="778" cy="480" rx="68" ry="28" fill={red} />
        <path d="M50 265V305C80 410 400 484 778 486C1150 486 1500 410 1508 305V262Z" fill="url(#rim)" />
        <Line d="M50 265V305C80 410 400 484 778 486C1150 486 1500 410 1508 305V262" c={red} w={4} />
        <Line d="M50 284C80 392 400 456 778 458C1150 458 1500 392 1508 282" c={red} w={2} />
        <ellipse cx="760" cy="458" rx="90" ry="24" fill="#ee8a8a" opacity=".6" />
        <ellipse cx="778" cy="262" rx="729" ry="165" fill="#562a2e" stroke={red} strokeWidth="4" vectorEffect="non-scaling-stroke" />
        <Line d="M415 120L1225 395M138 342L1345 157M138 345V390M1218 398V450M1232 396V448" c={red} w={2} />
      </g>
    </>
  );
};

/* ---------- right panel ---------- */

const panels = [
  ["Layers", <path d="M72 23L126 57L72 89L18 57ZM38 68L18 80L72 112L126 80L106 68" />],
  ["Properties", <><circle cx="71" cy="72" r="50" /><circle cx="71" cy="72" r="25" /></>],
  ["Notes", <path d="M42 22H84L105 43V110H42ZM84 22V43H105" />],
  ["Blocks", <path d="M63 24L112 40V100L78 122L24 103V50ZM24 50L78 65L112 40M78 65V122" />],
  ["Views", <><path d="M16 45H42L50 31H88L94 43H124V112H16ZM22 45V38H32V45" /><circle cx="70" cy="78" r="28" /><circle cx="70" cy="78" r="16" /></>],
  ["CPlanes", <><path d="M48 32L128 54M38 50L120 72M30 66L112 92M20 80L104 108M48 32L20 80M68 36L40 88M88 42L62 96M108 48L84 102M128 54L104 108" strokeWidth="2.500" /><path d="M92 40L80 62L116 74" strokeWidth="6" /></>],
  ["Commands", <path d="M48 27H124Q130 34 126 42H112Q110 30 118 27M48 27Q38 32 44 44V98M110 42V104Q108 118 96 118H34Q24 118 26 100H84Q98 104 88 116" />],
  ["Display", <path d="M24 27H120V111H24ZM24 34H46M32 30V38M40 30V38" />],
  ["Monitor", <path d="M28 25H120Q124 25 124 30V98Q124 105 118 105H30Q24 105 24 98V30Q24 25 28 25ZM32 33H116V88H32ZM64 105V116H84V105M48 118H100" />],
];

const PanelTabs = ({ active }) => (
  <div className="h-[52px] shrink-0 flex items-center pl-[22px] bg-linear-to-b from-[#f8f8f8] to-[#e4e4e4] border-b-2 border-[#c8c8c8]">
    {panels.map(([name, art]) => (
      <button key={name} aria-label={name} className="w-12 h-12 shrink-0">
        <svg viewBox="0 0 142 142" className="w-full h-full" fill="none" stroke={name === active ? "#2f7cf6" : "#4a4a4a"} strokeWidth="5">
          {art}
        </svg>
      </button>
    ))}
    <button aria-label="Help" className="w-12 text-[44px] leading-none font-bold text-[#4a4a4a]">?</button>
  </div>
);

const Bulb = ({ off, dim }) => (
  <svg viewBox="0 0 28 30" className={dim ? "w-7 h-[30px] mx-auto opacity-35" : "w-7 h-[30px] mx-auto"}>
    <path
      d="M14 1C6 1 2 5 2 10C2 15 8 18 10 22H18C20 18 26 15 26 10C26 5 22 1 14 1Z"
      fill={off ? "#fff" : "#fba51c"}
      stroke={off ? "#aaa" : "#ee8f10"}
    />
    {!off && <ellipse cx="14" cy="7" rx="8" ry="4" fill="#ffd977" />}
    <path d="M10 22H18V26L14 29L10 26Z" fill="#e4e8ee" stroke="#8c95a2" />
  </svg>
);

const Unlock = ({ dim }) => (
  <svg viewBox="0 0 28 28" className={dim ? "w-7 h-7 mx-auto opacity-35" : "w-7 h-7 mx-auto"}>
    <path d="M15 13V7Q16 2 20 2Q25 2 25 7V11" fill="none" stroke="#8c919c" strokeWidth="4" />
    <path d="M15 13V7Q16 2 20 2Q25 2 25 7V11" fill="none" stroke="#f0f1f4" strokeWidth="1.500" />
    <rect x="1" y="13" width="19" height="14" rx="1" fill="#d5852a" stroke="#9c5510" />
    <rect x="3" y="15" width="13" height="4" fill="#f0b566" />
  </svg>
);

const LayerTable = () => {
  const [current, setCurrent] = useState("step motor");
  return (
    <div className="h-[539px] shrink-0 overflow-hidden bg-white">
      <table className="w-full table-fixed border-separate border-spacing-x-0 border-spacing-y-0.5 text-2xl whitespace-nowrap">
        <colgroup>
          <col className="w-[199px]" />
          <col className="w-[46px]" />
          <col className="w-[46px]" />
          <col className="w-[46px]" />
          <col className="w-[60px]" />
          <col className="w-12" />
          <col />
        </colgroup>
        <thead>
          <tr className="h-7 text-[22px] text-left">
            <th className="font-normal pl-2 py-0 leading-6 border-b border-r border-[#dcdcdc]">Name</th>
            {[0, 1, 2, 3, 4].map((i) => (
              <th key={i} className="border-b border-r border-[#dcdcdc] p-0"></th>
            ))}
            <th className="font-normal pl-2.5 py-0 leading-6 overflow-hidden border-b border-[#dcdcdc]">Linetype</th>
          </tr>
        </thead>
        <tbody>
          {layers.map((layer) => {
            const isCurrent = layer.name === current;
            return (
              <tr key={layer.name} className={isCurrent ? "h-8 bg-[#dcdcdc]" : "h-8"}>
                <td className="pl-[38px] py-0 leading-7">
                  <label htmlFor={layer.name}>{layer.name}</label>
                </td>
                <td className="p-0">
                  <input
                    id={layer.name}
                    type="radio"
                    name="layer"
                    checked={isCurrent}
                    onChange={() => setCurrent(layer.name)}
                    className="block mx-auto appearance-none w-7 h-7 rounded-full bg-white border-2 border-[#c0c0c0] checked:border-10 checked:border-[#3e9bfb]"
                  />
                </td>
                <td className="p-0"><Bulb off={layer.off} dim={isCurrent} /></td>
                <td className="p-0"><Unlock dim={isCurrent} /></td>
                <td className="p-0">
                  <div className="w-7 h-7 mx-auto border-2 border-black" style={{ backgroundColor: layer.color }}></div>
                </td>
                <td className="p-0">
                  <div className="w-[22px] h-[22px] mx-auto rounded-full bg-linear-to-br from-[#f4f4f4] from-15% via-[#777] via-50% to-black to-80%"></div>
                </td>
                <td className="pl-3 py-0 leading-7 overflow-hidden">Cont..</td>
              </tr>
            );
          })}
        </tbody>
      </table>
    </div>
  );
};

const RightPanel = () => {
  return (
    <aside className="w-[526px] shrink-0 flex flex-col border-l-2 border-[#8c8c8c]">
      <PanelTabs active="Layers" />
      <LayerTable />
      <div className="h-8 shrink-0 pl-1.5 flex items-center bg-[#fafafa] border-y-2 border-[#dadada]">
        <div className="w-[423px] h-4 rounded-full bg-[#c1c1c1]"></div>
      </div>
      <div className="h-[66px] shrink-0 flex items-center gap-8 pl-9 border-b-2 border-[#8c8c8c]">
        <div className="flex rounded-md bg-white shadow-sm">
          <button aria-label="Add layer" className="w-11 h-9 border-r border-[#d8d8d8]">
            <svg viewBox="0 0 44 36" className="w-full h-full"><path d="M11 18H33M22 7V29" stroke="#333" strokeWidth="2" /></svg>
          </button>
          <button aria-label="Remove layer" className="w-11 h-9">
            <svg viewBox="0 0 44 36" className="w-full h-full"><path d="M11 18H33" stroke="#333" strokeWidth="2" /></svg>
          </button>
        </div>
        <button aria-label="Layer options" className="rounded-md bg-white shadow-sm">
          <svg viewBox="0 0 72 36" className="w-[72px] h-9" fill="none" stroke="#222">
            <circle cx="24" cy="18" r="5.500" strokeWidth="4" />
            <path d="M24 8V12M24 24V28M14 18H18M30 18H34M17 11L20 14M28 22L31 25M31 11L28 14M20 22L17 25" strokeWidth="4" />
            <path d="M50 15L56 21L62 15" strokeWidth="2" />
          </svg>
        </button>
      </div>
      <PanelTabs active="Properties" />
      <div className="flex-1 flex items-center justify-center pb-[60px] text-[40px] text-[#ababab]">
        No Selection
      </div>
    </aside>
  );
};

const StatusBar = () => {
  return (
    <footer className="h-14 shrink-0 flex items-center pl-2 pt-1 bg-[#d6d6d6] text-2xl whitespace-nowrap">
      <svg viewBox="0 0 30 22" className="w-[30px] h-[22px] mr-1" stroke="#555" strokeWidth="2">
        <path d="M0 2H30M0 8H30M0 14H30M0 20H30" />
      </svg>
      <span>Display mode set to "Shaded".</span>
      <span className="ml-auto">Millimeters</span>
      <div className="relative ml-8 mr-7">
        <select aria-label="Coordinates" defaultValue="CPlane" className="appearance-none w-[140px] h-8 pl-3 rounded-md border-2 border-[#989898] leading-7">
          <option>CPlane</option>
          <option>World</option>
        </select>
        <svg viewBox="0 0 14 20" className="absolute right-2.5 top-1.5 w-3.5 h-5 pointer-events-none" fill="none" stroke="#8a8a8a" strokeWidth="2">
          <path d="M2 7L7 2L12 7M2 13L7 18L12 13" />
        </svg>
      </div>
      <span className="w-[164px]">X: -16.231</span>
      <span className="w-[170px]">Y: 20.267</span>
      <span className="w-[372px]">Z: 0.000</span>
    </footer>
  );
};

export default App;
